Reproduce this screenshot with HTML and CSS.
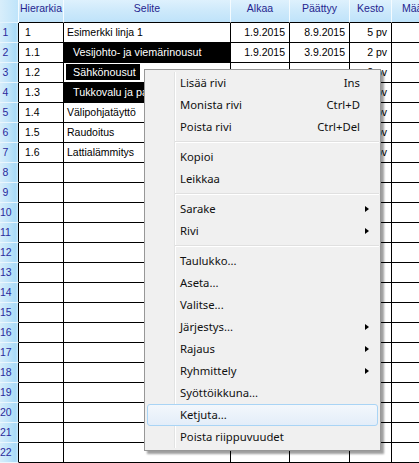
FILE: index.html
```html
<!DOCTYPE html>
<html lang="fi">
<head>
<meta charset="utf-8">
<title>Taulukko</title>
<link rel="stylesheet" href="styles.css">
</head>
<body>
<div class="grid">
  <div class="row head">
    <div class="c num"></div>
    <div class="c hier">Hierarkia</div>
    <div class="c sel">Selite</div>
    <div class="c d1">Alkaa</div>
    <div class="c d2">Päättyy</div>
    <div class="c dur">Kesto</div>
    <div class="c mm">Määrä</div>
  </div>
  <div class="row"><div class="c num">1</div><div class="c hier">1</div><div class="c sel">Esimerkki linja 1</div><div class="c d1">1.9.2015</div><div class="c d2">8.9.2015</div><div class="c dur">5 pv</div><div class="c mm"></div></div>
  <div class="row"><div class="c num">2</div><div class="c hier big">1.1</div><div class="c sel selected">Vesijohto- ja viemärinousut</div><div class="c d1">1.9.2015</div><div class="c d2">3.9.2015</div><div class="c dur">2 pv</div><div class="c mm"></div></div>
  <div class="row"><div class="c num">3</div><div class="c hier big">1.2</div><div class="c sel"><span class="editbox">Sähkönousut</span></div><div class="c d1"></div><div class="c d2"></div><div class="c dur">2 pv</div><div class="c mm"></div></div>
  <div class="row"><div class="c num">4</div><div class="c hier big">1.3</div><div class="c sel selected">Tukkovalu ja pa</div><div class="c d1"></div><div class="c d2"></div><div class="c dur">3 pv</div><div class="c mm"></div></div>
  <div class="row"><div class="c num">5</div><div class="c hier">1.4</div><div class="c sel">Välipohjatäyttö</div><div class="c d1"></div><div class="c d2"></div><div class="c dur">3 pv</div><div class="c mm"></div></div>
  <div class="row"><div class="c num">6</div><div class="c hier">1.5</div><div class="c sel">Raudoitus</div><div class="c d1"></div><div class="c d2"></div><div class="c dur">2 pv</div><div class="c mm"></div></div>
  <div class="row"><div class="c num">7</div><div class="c hier">1.6</div><div class="c sel">Lattialämmitys</div><div class="c d1"></div><div class="c d2"></div><div class="c dur">1 pv</div><div class="c mm"></div></div>
  <div class="row"><div class="c num">8</div><div class="c hier"></div><div class="c sel"></div><div class="c d1"></div><div class="c d2"></div><div class="c dur"></div><div class="c mm"></div></div>
  <div class="row"><div class="c num">9</div><div class="c hier"></div><div class="c sel"></div><div class="c d1"></div><div class="c d2"></div><div class="c dur"></div><div class="c mm"></div></div>
  <div class="row"><div class="c num">10</div><div class="c hier"></div><div class="c sel"></div><div class="c d1"></div><div class="c d2"></div><div class="c dur"></div><div class="c mm"></div></div>
  <div class="row"><div class="c num">11</div><div class="c hier"></div><div class="c sel"></div><div class="c d1"></div><div class="c d2"></div><div class="c dur"></div><div class="c mm"></div></div>
  <div class="row"><div class="c num">12</div><div class="c hier"></div><div class="c sel"></div><div class="c d1"></div><div class="c d2"></div><div class="c dur"></div><div class="c mm"></div></div>
  <div class="row"><div class="c num">13</div><div class="c hier"></div><div class="c sel"></div><div class="c d1"></div><div class="c d2"></div><div class="c dur"></div><div class="c mm"></div></div>
  <div class="row"><div class="c num">14</div><div class="c hier"></div><div class="c sel"></div><div class="c d1"></div><div class="c d2"></div><div class="c dur"></div><div class="c mm"></div></div>
  <div class="row"><div class="c num">15</div><div class="c hier"></div><div class="c sel"></div><div class="c d1"></div><div class="c d2"></div><div class="c dur"></div><div class="c mm"></div></div>
  <div class="row"><div class="c num">16</div><div class="c hier"></div><div class="c sel"></div><div class="c d1"></div><div class="c d2"></div><div class="c dur"></div><div class="c mm"></div></div>
  <div class="row"><div class="c num">17</div><div class="c hier"></div><div class="c sel"></div><div class="c d1"></div><div class="c d2"></div><div class="c dur"></div><div class="c mm"></div></div>
  <div class="row"><div class="c num">18</div><div class="c hier"></div><div class="c sel"></div><div class="c d1"></div><div class="c d2"></div><div class="c dur"></div><div class="c mm"></div></div>
  <div class="row"><div class="c num">19</div><div class="c hier"></div><div class="c sel"></div><div class="c d1"></div><div class="c d2"></div><div class="c dur"></div><div class="c mm"></div></div>
  <div class="row"><div class="c num">20</div><div class="c hier"></div><div class="c sel"></div><div class="c d1"></div><div class="c d2"></div><div class="c dur"></div><div class="c mm"></div></div>
  <div class="row"><div class="c num">21</div><div class="c hier"></div><div class="c sel"></div><div class="c d1"></div><div class="c d2"></div><div class="c dur"></div><div class="c mm"></div></div>
  <div class="row"><div class="c num">22</div><div class="c hier"></div><div class="c sel"></div><div class="c d1"></div><div class="c d2"></div><div class="c dur"></div><div class="c mm"></div></div>
</div>

<div class="menu">
  <div class="gutter"></div>
  <div class="item">Lisää rivi<span class="key">Ins</span></div>
  <div class="item">Monista rivi<span class="key">Ctrl+D</span></div>
  <div class="item">Poista rivi<span class="key">Ctrl+Del</span></div>
  <div class="sep"></div>
  <div class="item">Kopioi</div>
  <div class="item">Leikkaa</div>
  <div class="sep"></div>
  <div class="item sub">Sarake</div>
  <div class="item sub">Rivi</div>
  <div class="sep"></div>
  <div class="item">Taulukko...</div>
  <div class="item">Aseta...</div>
  <div class="item">Valitse...</div>
  <div class="item sub">Järjestys...</div>
  <div class="item sub">Rajaus</div>
  <div class="item sub">Ryhmittely</div>
  <div class="item">Syöttöikkuna...</div>
  <div class="item hl">Ketjuta...</div>
  <div class="item">Poista riippuvuudet</div>
</div>
</body>
</html>
```

FILE: styles.css
```css
html, body {
  margin: 0;
  padding: 0;
  background: #ffffff;
  overflow: hidden;
}
body {
  width: 419px;
  height: 463px;
  position: relative;
  font-family: "Liberation Sans", Arial, sans-serif;
  font-size: 10.5px;
  color: #000;
}
.grid {
  display: flex;
  flex-direction: column;
  width: 419px;
  overflow: hidden;
}
.row {
  display: flex;
  height: 20px;
}
.c {
  box-sizing: border-box;
  height: 20px;
  line-height: 19px;
  border-right: 1px solid #000;
  border-bottom: 1px solid #000;
  white-space: nowrap;
  overflow: hidden;
  flex: none;
}
.num {
  width: 19px;
  padding-right: 7px;
  text-align: center;
  color: #2a2a9c;
  background: linear-gradient(to right, #d8eefb 0%, #c2e5fa 45%, #a9dbf8 85%, #c6e8fb 100%);
  border-bottom-color: #eaf6fd;
}
.hier { width: 45px; padding-left: 6px; }
.sel { width: 167px; padding-left: 3px; }
.d1 { width: 59px; text-align: right; padding-right: 4px; }
.d2 { width: 60px; text-align: right; padding-right: 4px; }
.dur { width: 42px; text-align: right; padding-right: 4px; }
.mm { width: 60px; padding-left: 10px; }

.big { font-size: 10.75px; }
.selected {
  background: #000;
  color: #fff;
  padding-left: 9px;
  font-size: 10.75px;
}
.editbox {
  display: inline-block;
  background: #000;
  color: #fff;
  margin: 1px 0 0 -1px;
  padding: 0 4px 0 7px;
  height: 16px;
  line-height: 16px;
  font-size: 10.75px;
  vertical-align: top;
}

.head {
  height: 23px;
}
.head .c {
  height: 23px;
  line-height: 16px;
  color: #25258f;
  text-align: center;
  padding: 0;
  border-right-color: #f4fbff;
  background: linear-gradient(to bottom, #def1fd 0%, #cde9fb 50%, #bfe3fa 100%);
}
.head .num {
  border-bottom-color: #e3f3fd;
  background: linear-gradient(to right, #d8eefb, #bfe4fa);
}
.head .mm { text-align: left; padding-left: 10px; }

/* context menu */
.menu {
  position: absolute;
  left: 144px;
  top: 69px;
  width: 237px;
  box-sizing: border-box;
  background: #f0f0f0;
  border: 1px solid #979797;
  padding: 2px 0;
  box-shadow: 3px 3px 2px rgba(0, 0, 0, 0.38);
  font-family: "Noto Sans", "Open Sans", sans-serif;
  font-size: 11.3px;
  color: #111;
}
.gutter {
  position: absolute;
  left: 29px;
  top: 2px;
  bottom: 2px;
  width: 1px;
  background: #e2e3e3;
  box-shadow: 1px 0 0 #ffffff;
}
.item {
  position: relative;
  height: 22px;
  box-sizing: border-box;
  line-height: 20px;
  margin: 0 2px;
  padding-left: 32px;
  border: 1px solid transparent;
  border-radius: 3px;
  white-space: nowrap;
}
.item.hl {
  border-color: #a9d4f5;
  background: linear-gradient(to bottom, #f3f7fc, #e3edf9);
}
.key {
  position: absolute;
  right: 17px;
  top: 0;
}
.sub::after {
  content: "";
  position: absolute;
  right: 8px;
  top: 7px;
  width: 0;
  height: 0;
  border-left: 4px solid #000;
  border-top: 3.5px solid transparent;
  border-bottom: 3.5px solid transparent;
}
.sep {
  position: relative;
  height: 8px;
  margin: 0 1px 0 30px;
}
.sep::after {
  content: "";
  position: absolute;
  left: 0;
  right: 0;
  top: 3px;
  height: 1px;
  background: #e0e0e0;
  box-shadow: 0 1px 0 #ffffff;
}
```
